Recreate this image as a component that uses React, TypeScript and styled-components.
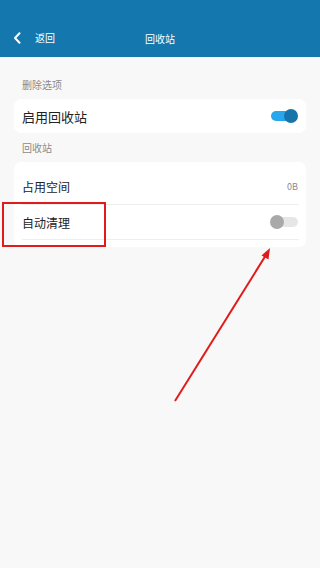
import React from 'react';
import styled, { createGlobalStyle } from 'styled-components';

const GlobalStyle = createGlobalStyle`
  html, body {
    margin: 0;
    padding: 0;
    background: #f8f8f8;
  }
  body {
    font-family: "Noto Sans CJK SC", "Noto Sans", sans-serif;
  }
`;

interface SwitchProps {
    on?: boolean;
}

const Switch: React.FC<SwitchProps> = ({ on }) => (
    <Track $on={on}>
        <Knob $on={on} />
    </Track>
);

const App: React.FC = () => {
    return (
        <Page>
            <GlobalStyle />
            <Header>
                <BackButton>
                    <svg width="8" height="12" viewBox="0 0 8 12">
                        <path d="M6.5 1.2 L2 6 L6.5 10.8" fill="none" stroke="#fff" strokeWidth="2" strokeLinecap="round" strokeLinejoin="round" />
                    </svg>
                    <BackText>返回</BackText>
                </BackButton>
                <Title>回收站</Title>
            </Header>
            <Content>
                <SectionLabel>删除选项</SectionLabel>
                <Card>
                    <Row $height={34}>
                        <RowLabel $big>启用回收站</RowLabel>
                        <Switch on />
                    </Row>
                </Card>
                <SectionLabel $gapTop>回收站</SectionLabel>
                <Card $padded>
                    <Row $height={36} $divider>
                        <RowLabel>占用空间</RowLabel>
                        <Value>0B</Value>
                    </Row>
                    <Row $height={35} $divider>
                        <RowLabel>自动清理</RowLabel>
                        <Switch />
                    </Row>
                </Card>
            </Content>
            <Highlight />
            <Arrow width="320" height="568" viewBox="0 0 320 568">
                <line x1="175" y1="401" x2="266" y2="255" stroke="#e01b1b" strokeWidth="2" />
                <polygon points="270,248 261.5,255.5 268.5,259.5" fill="#e01b1b" />
            </Arrow>
        </Page>
    );
};

const Page = styled.div`
  position: relative;
  width: 320px;
  min-height: 568px;
  background: #f8f8f8;
  overflow: hidden;
`;

const Header = styled.div`
  position: relative;
  height: 57px;
  background-color: #1477ad;
  color: #fff;
  display: flex;
  align-items: flex-end;
  justify-content: center;
  padding-bottom: 12px;
  box-sizing: border-box;
`;

const BackButton = styled.div`
  position: absolute;
  left: 13px;
  bottom: 13px;
  display: flex;
  align-items: center;
  gap: 14px;
`;

const BackText = styled.span`
  font-size: 10px;
  line-height: 12px;
`;

const Title = styled.span`
  font-size: 10px;
  line-height: 12px;
`;

const Content = styled.div`
  padding: 21px 14px 0;
  display: flex;
  flex-direction: column;
`;

const SectionLabel = styled.div<{ $gapTop?: boolean }>`
  font-size: 10px;
  color: #8a8a8a;
  padding: 0 8px;
  line-height: 14px;
  margin-top: ${p => (p.$gapTop ? '8px' : '0')};
  margin-bottom: 7px;
`;

const Card = styled.div<{ $padded?: boolean }>`
  background: #fff;
  border-radius: 7px;
  padding: ${p => (p.$padded ? '7px 7px 7px 8px' : '0 8px')};
`;

const Row = styled.div<{ $divider?: boolean; $height: number }>`
  display: flex;
  align-items: center;
  justify-content: space-between;
  height: ${p => p.$height}px;
  border-bottom: ${p => (p.$divider ? '1px solid #eeeeee' : 'none')};
  box-sizing: border-box;
`;

const RowLabel = styled.span<{ $big?: boolean }>`
  font-size: ${p => (p.$big ? '13px' : '12px')};
  color: #222;
`;

const Value = styled.span`
  font-size: 9px;
  color: #8a8a8a;
  margin-right: 1px;
`;

const Track = styled.div<{ $on?: boolean }>`
  position: relative;
  width: 26px;
  height: 10px;
  border-radius: 5px;
  background: ${p => (p.$on ? '#2aa6ec' : '#e6e6e6')};
  margin-right: 1px;
`;

const Knob = styled.div<{ $on?: boolean }>`
  position: absolute;
  top: -2px;
  ${p => (p.$on ? 'right: -1px;' : 'left: -2px;')}
  width: 14px;
  height: 14px;
  border-radius: 50%;
  background: ${p => (p.$on ? '#1674ab' : '#a9a9a9')};
`;

const Highlight = styled.div`
  position: absolute;
  left: 2px;
  top: 202px;
  width: 104px;
  height: 45px;
  border: 2px solid #e01b1b;
  box-sizing: border-box;
`;

const Arrow = styled.svg`
  position: absolute;
  left: 0;
  top: 0;
  pointer-events: none;
`;

export default App;
